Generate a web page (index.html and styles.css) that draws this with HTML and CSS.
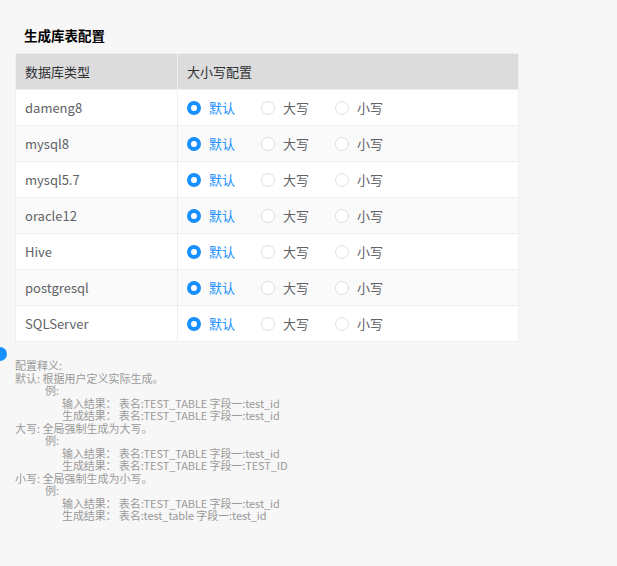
FILE: index.html
```html
<!DOCTYPE html>
<html lang="zh-CN">

<head>
    <meta charset="UTF-8">
    <meta name="viewport" content="width=device-width, initial-scale=1.0">
    <title>生成库表配置</title>
    <link rel="stylesheet" href="styles.css">
</head>

<body>
    <div class="page">
        <h4 class="page-title">生成库表配置</h4>

        <table class="case-table">
            <thead>
                <tr>
                    <th class="col-db">数据库类型</th>
                    <th>大小写配置</th>
                </tr>
            </thead>
            <tbody>
                <tr>
                    <td>dameng8</td>
                    <td>
                        <div class="radio-group">
                            <span class="radio checked"><i class="radio-dot"></i>默认</span>
                            <span class="radio"><i class="radio-dot"></i>大写</span>
                            <span class="radio"><i class="radio-dot"></i>小写</span>
                        </div>
                    </td>
                </tr>
                <tr>
                    <td>mysql8</td>
                    <td>
                        <div class="radio-group">
                            <span class="radio checked"><i class="radio-dot"></i>默认</span>
                            <span class="radio"><i class="radio-dot"></i>大写</span>
                            <span class="radio"><i class="radio-dot"></i>小写</span>
                        </div>
                    </td>
                </tr>
                <tr>
                    <td>mysql5.7</td>
                    <td>
                        <div class="radio-group">
                            <span class="radio checked"><i class="radio-dot"></i>默认</span>
                            <span class="radio"><i class="radio-dot"></i>大写</span>
                            <span class="radio"><i class="radio-dot"></i>小写</span>
                        </div>
                    </td>
                </tr>
                <tr>
                    <td>oracle12</td>
                    <td>
                        <div class="radio-group">
                            <span class="radio checked"><i class="radio-dot"></i>默认</span>
                            <span class="radio"><i class="radio-dot"></i>大写</span>
                            <span class="radio"><i class="radio-dot"></i>小写</span>
                        </div>
                    </td>
                </tr>
                <tr>
                    <td>Hive</td>
                    <td>
                        <div class="radio-group">
                            <span class="radio checked"><i class="radio-dot"></i>默认</span>
                            <span class="radio"><i class="radio-dot"></i>大写</span>
                            <span class="radio"><i class="radio-dot"></i>小写</span>
                        </div>
                    </td>
                </tr>
                <tr>
                    <td>postgresql</td>
                    <td>
                        <div class="radio-group">
                            <span class="radio checked"><i class="radio-dot"></i>默认</span>
                            <span class="radio"><i class="radio-dot"></i>大写</span>
                            <span class="radio"><i class="radio-dot"></i>小写</span>
                        </div>
                    </td>
                </tr>
                <tr>
                    <td>SQLServer</td>
                    <td>
                        <div class="radio-group">
                            <span class="radio checked"><i class="radio-dot"></i>默认</span>
                            <span class="radio"><i class="radio-dot"></i>大写</span>
                            <span class="radio"><i class="radio-dot"></i>小写</span>
                        </div>
                    </td>
                </tr>
            </tbody>
        </table>

        <div class="notes">
            <span class="side-dot"></span>
            <div>配置释义:</div>
            <div>默认: 根据用户定义实际生成。</div>
            <div class="ind-1">例:</div>
            <div class="ind-2">输入结果： 表名:TEST_TABLE 字段一:test_id</div>
            <div class="ind-2">生成结果： 表名:TEST_TABLE 字段一:test_id</div>
            <div>大写: 全局强制生成为大写。</div>
            <div class="ind-1">例:</div>
            <div class="ind-2">输入结果： 表名:TEST_TABLE 字段一:test_id</div>
            <div class="ind-2">生成结果： 表名:TEST_TABLE 字段一:TEST_ID</div>
            <div>小写: 全局强制生成为小写。</div>
            <div class="ind-1">例:</div>
            <div class="ind-2">输入结果： 表名:TEST_TABLE 字段一:test_id</div>
            <div class="ind-2">生成结果： 表名:test_table 字段一:test_id</div>
        </div>
    </div>
</body>

</html>
```

FILE: styles.css
```css
* {
  margin: 0;
  padding: 0;
  box-sizing: border-box;
  font-family: "Noto Sans CJK SC", "Noto Sans", sans-serif;
}

body {
  background-color: #f7f7f7;
}

.page {
  position: relative;
  padding: 25px 0 0 15px;
}

.page-title {
  margin-left: 9px;
  height: 20px;
  line-height: 20px;
  font-size: 13.5px;
  font-weight: 700;
  color: #000;
  margin-bottom: 8px;
}

.case-table {
  width: 504px;
  border-collapse: collapse;
  font-size: 13px;
  color: #606266;
}

.case-table th,
.case-table td {
  border: 1px solid #ebeef5;
  padding: 0 9px;
  text-align: left;
  font-weight: 400;
}

.case-table th {
  height: 36px;
  background-color: #dcdcdc;
  color: #303133;
}

.case-table td {
  height: 36px;
  background-color: #fff;
}

.case-table tbody tr:nth-child(even) td {
  background-color: #fafafa;
}

.case-table .col-db {
  width: 162px;
}

.radio-group {
  display: flex;
  align-items: center;
}

.radio {
  display: flex;
  align-items: center;
  gap: 8px;
  margin-right: 26px;
  color: #606266;
  cursor: pointer;
}

.radio-dot {
  width: 14px;
  height: 14px;
  border-radius: 50%;
  border: 1px solid #dcdfe6;
  background-color: #fff;
}

.radio.checked {
  color: #1890ff;
}

.radio.checked .radio-dot {
  border: 4px solid #1890ff;
  background-color: #fff;
}

.notes {
  margin-top: 17px;
  font-family: "Noto Sans", "Noto Sans CJK SC", sans-serif;
  font-size: 11px;
  line-height: 12.5px;
  color: #9a9a9a;
}

.notes div {
  white-space: pre;
}

.notes .ind-1 {
  padding-left: 30px;
}

.notes .ind-2 {
  padding-left: 47px;
  letter-spacing: -0.1px;
}

.side-dot {
  position: absolute;
  left: -7px;
  top: 347px;
  width: 14px;
  height: 14px;
  border-radius: 50%;
  background-color: #1890ff;
}
```
